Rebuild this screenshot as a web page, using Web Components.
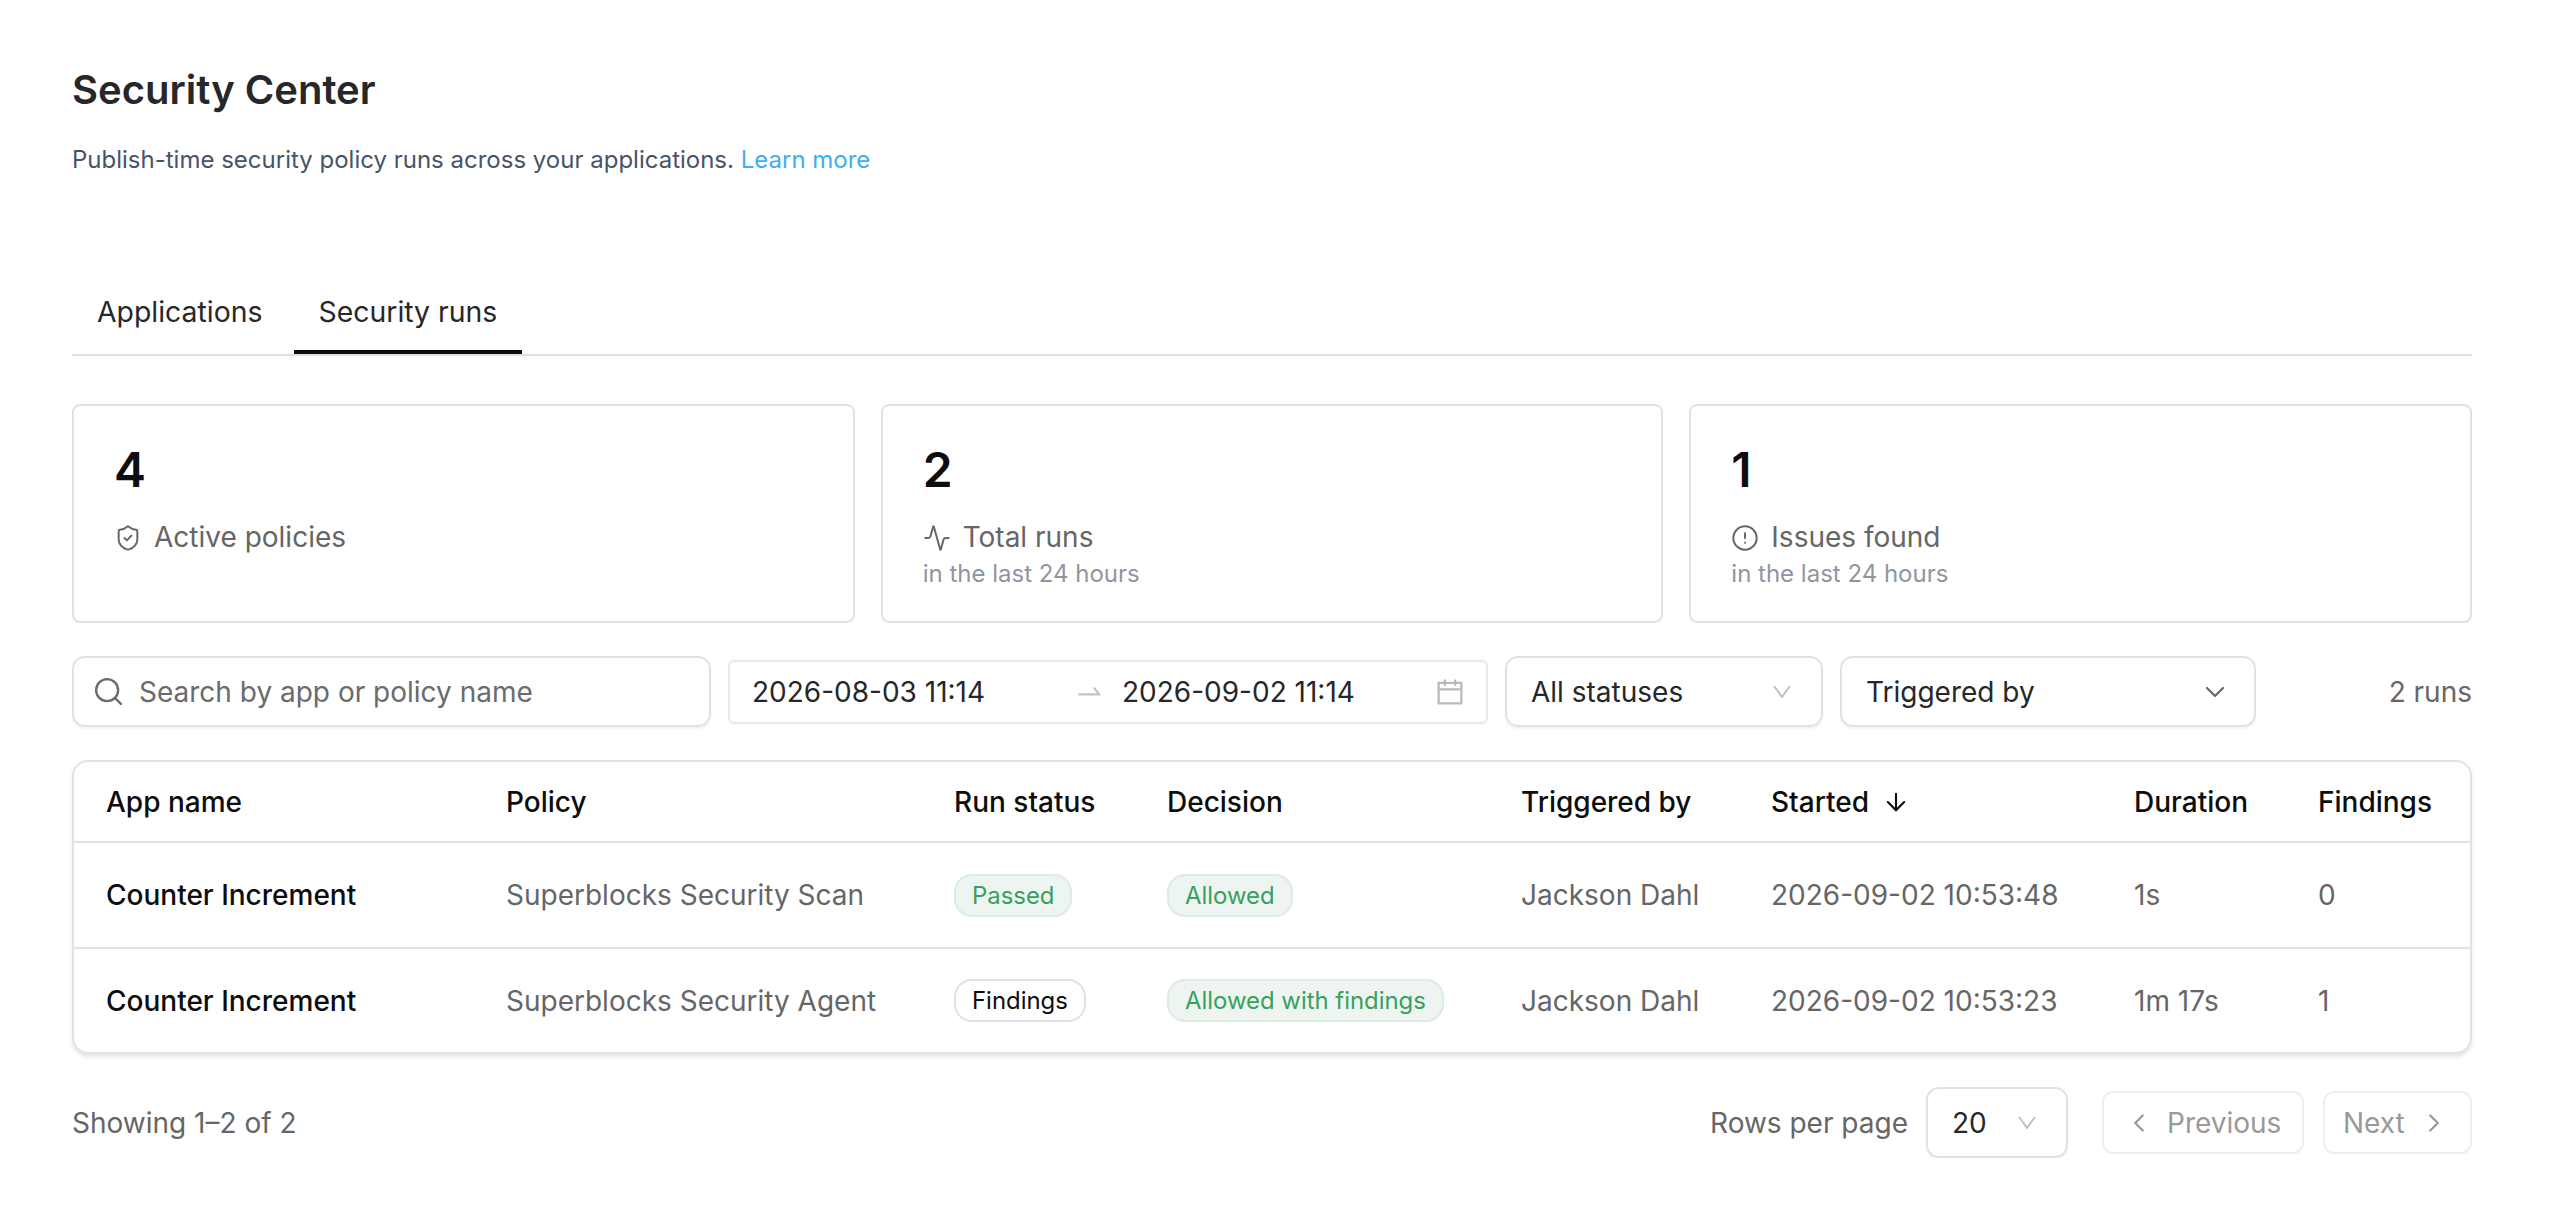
<!DOCTYPE html>
<html lang="en"><head><meta charset="utf-8"><title>Security Center</title>
<style>
html,body{margin:0;padding:0;background:#fff}
body{font-family:Inter,"Liberation Sans",sans-serif;color:#27272a}
</style></head><body>
<sc-app>
  <sc-header><span slot="title">Security Center</span>Publish-time security policy runs across your applications. <a>Learn more</a></sc-header>
  <sc-tabs><sc-tab>Applications</sc-tab><sc-tab active>Security runs</sc-tab></sc-tabs>
  <sc-stats>
    <sc-stat value="4" label="Active policies" icon="shield"></sc-stat>
    <sc-stat value="2" label="Total runs" icon="activity" sub="in the last 24 hours"></sc-stat>
    <sc-stat value="1" label="Issues found" icon="alert" sub="in the last 24 hours"></sc-stat>
  </sc-stats>
  <sc-toolbar>
    <sc-search placeholder="Search by app or policy name"></sc-search>
    <sc-daterange from="2026-08-03 11:14" to="2026-09-02 11:14"></sc-daterange>
    <sc-select w="318" value="All statuses" kind="light"></sc-select>
    <sc-select w="416" value="Triggered by" kind="dark"></sc-select>
    <sc-count>2 runs</sc-count>
  </sc-toolbar>
  <sc-table>
    <sc-row head><sc-cell>App name</sc-cell><sc-cell>Policy</sc-cell><sc-cell>Run status</sc-cell><sc-cell>Decision</sc-cell><sc-cell>Triggered by</sc-cell><sc-cell>Started <sc-sort></sc-sort></sc-cell><sc-cell>Duration</sc-cell><sc-cell>Findings</sc-cell></sc-row>
    <sc-row><sc-cell strong>Counter Increment</sc-cell><sc-cell>Superblocks Security Scan</sc-cell><sc-cell><sc-badge tone="green">Passed</sc-badge></sc-cell><sc-cell><sc-badge tone="green">Allowed</sc-badge></sc-cell><sc-cell>Jackson Dahl</sc-cell><sc-cell>2026-09-02 10:53:48</sc-cell><sc-cell>1s</sc-cell><sc-cell>0</sc-cell></sc-row>
    <sc-row><sc-cell strong>Counter Increment</sc-cell><sc-cell>Superblocks Security Agent</sc-cell><sc-cell><sc-badge>Findings</sc-badge></sc-cell><sc-cell><sc-badge tone="green">Allowed with findings</sc-badge></sc-cell><sc-cell>Jackson Dahl</sc-cell><sc-cell>2026-09-02 10:53:23</sc-cell><sc-cell>1m 17s</sc-cell><sc-cell>1</sc-cell></sc-row>
  </sc-table>
  <sc-pager showing="Showing 1–2 of 2" size="20"></sc-pager>
</sc-app>
<script>
const ICONS={
 shield:'<svg viewBox="0 0 24 24" width="28" height="28" fill="none" stroke="currentColor" stroke-width="1.7" stroke-linecap="round" stroke-linejoin="round"><path d="M20 13c0 5-3.5 7.5-7.66 8.95a1 1 0 0 1-.67-.01C7.5 20.5 4 18 4 13V6a1 1 0 0 1 1-1c2 0 4.5-1.2 6.24-2.72a1.17 1.17 0 0 1 1.52 0C14.51 3.81 17 5 19 5a1 1 0 0 1 1 1z"/><path d="m9 12 2 2 4-4"/></svg>',
 activity:'<svg viewBox="0 0 24 24" width="28" height="28" fill="none" stroke="currentColor" stroke-width="1.7" stroke-linecap="round" stroke-linejoin="round"><path d="M22 12h-2.48a2 2 0 0 0-1.93 1.46l-2.35 8.36a.25.25 0 0 1-.48 0L9.24 2.18a.25.25 0 0 0-.48 0l-2.35 8.36A2 2 0 0 1 4.49 12H2"/></svg>',
 alert:'<svg viewBox="0 0 24 24" width="28" height="28" fill="none" stroke="currentColor" stroke-width="1.7" stroke-linecap="round" stroke-linejoin="round"><circle cx="12" cy="12" r="10"/><line x1="12" x2="12" y1="8" y2="12"/><line x1="12" x2="12.01" y1="16" y2="16"/></svg>',
 search:'<svg viewBox="0 0 24 24" width="33" height="33" fill="none" stroke="currentColor" stroke-width="1.7" stroke-linecap="round" stroke-linejoin="round"><circle cx="11" cy="11" r="8"/><path d="m21 21-4.3-4.3"/></svg>',
 calendar:'<svg viewBox="0 0 1024 1024" width="32" height="32" fill="currentColor"><path d="M880 184H712v-64c0-4.4-3.6-8-8-8h-56c-4.4 0-8 3.6-8 8v64H384v-64c0-4.4-3.6-8-8-8h-56c-4.4 0-8 3.6-8 8v64H144c-17.7 0-32 14.3-32 32v664c0 17.7 14.3 32 32 32h736c17.7 0 32-14.3 32-32V216c0-17.7-14.3-32-32-32zm-40 656H184V460h656v380zM184 392V256h128v48c0 4.4 3.6 8 8 8h56c4.4 0 8-3.6 8-8v-48h256v48c0 4.4 3.6 8 8 8h56c4.4 0 8-3.6 8-8v-48h128v136H184z"/></svg>',
 swap:'<svg viewBox="0 0 1024 1024" width="31" height="31" fill="currentColor"><path d="M873.1 596.2l-164-208A32 32 0 0 0 684 376h-64.8c-6.7 0-10.4 7.7-6.3 13l144.3 183H152c-4.4 0-8 3.6-8 8v60c0 4.4 3.6 8 8 8h695.9c26.8 0 41.7-30.8 25.2-51.8z"/></svg>',
 caret:'<svg viewBox="0 0 1024 1024" width="24" height="24" fill="currentColor"><path d="M884 256h-75c-5.1 0-9.9 2.5-12.9 6.6L512 654.2 227.9 262.6c-3-4.1-7.8-6.6-12.9-6.6h-75c-6.1 0-9.7 6.9-6.1 11.7l352.6 486.1c12.8 17.6 39 17.6 51.7 0l352.6-486.1c3.7-4.8.1-11.7-6-11.7z"/></svg>',
 down:'<svg viewBox="0 0 24 24" width="32" height="32" fill="none" stroke="currentColor" stroke-width="1.6" stroke-linecap="round" stroke-linejoin="round"><path d="m6 9 6 6 6-6"/></svg>',
 left:'<svg viewBox="0 0 24 24" width="30" height="30" fill="none" stroke="currentColor" stroke-width="1.8" stroke-linecap="round" stroke-linejoin="round"><path d="m15 18-6-6 6-6"/></svg>',
 right:'<svg viewBox="0 0 24 24" width="30" height="30" fill="none" stroke="currentColor" stroke-width="1.8" stroke-linecap="round" stroke-linejoin="round"><path d="m9 18 6-6-6-6"/></svg>',
 arrow:'<svg viewBox="0 0 24 24" width="28" height="28" fill="none" stroke="currentColor" stroke-width="1.8" stroke-linecap="round" stroke-linejoin="round"><path d="M12 5v14"/><path d="m19 12-7 7-7-7"/></svg>'
};
function def(name,css,html){
  customElements.define(name,class extends HTMLElement{
    constructor(){super();this.attachShadow({mode:'open'});}
    connectedCallback(){
      const a=n=>this.getAttribute(n)||'';
      this.shadowRoot.innerHTML='<style>'+css+'</style>'+(typeof html==='function'?html(a,this):html);
    }
  });
}
def('sc-app',':host{display:block;box-sizing:border-box;width:2564px;padding:66px 92px 0 72px}','<slot></slot>');
def('sc-header',`:host{display:block;font-size:24px;line-height:34px;color:#475467}
 h1{margin:0 0 29px;font-size:40px;line-height:48px;font-weight:600;color:#27272a}
 ::slotted(a){color:#3eaef4}`,'<h1><slot name="title"></slot></h1><div><slot></slot></div>');
def('sc-tabs',':host{display:flex;margin-top:91px;border-bottom:2px solid #e0e0e0;gap:6px}','<slot></slot>');
def('sc-tab',`:host{display:block;box-sizing:border-box;height:86px;padding:25px 25px 0;font-size:28.4px;line-height:38px;color:#27272a}
 :host([active]){border-bottom:4px solid #0d0d0d}`,'<slot></slot>');
def('sc-stats',':host{display:grid;grid-template-columns:repeat(3,1fr);gap:26px;margin-top:48px}','<slot></slot>');
def('sc-stat',`:host{display:block;box-sizing:border-box;height:219px;border:2px solid #e2e2e5;border-radius:8px;padding:36px 40px 0}
 .v{font-size:48px;line-height:56px;font-weight:600;color:#0d0d0d}
 .l{display:flex;align-items:center;gap:12px;margin-top:21px;font-size:28px;line-height:36px;color:#666}
 svg{display:block;flex:none;margin-top:2px}
 .s{font-size:24px;line-height:34px;color:#9195a0;margin-top:2px}`,
 a=>`<div class="v">${a('value')}</div><div class="l">${ICONS[a('icon')]}<span>${a('label')}</span></div>${a('sub')?`<div class="s">${a('sub')}</div>`:''}`);
def('sc-toolbar',':host{display:flex;align-items:center;gap:17px;margin-top:33px;height:71px}','<slot></slot>');
def('sc-search',`:host{display:flex;box-sizing:border-box;align-items:center;gap:14px;width:639px;height:71px;padding:0 18px;border:2px solid #e2e2e5;border-radius:13px;box-shadow:0 2px 2px rgba(0,0,0,.05);font-size:28px;color:#6b6b6b}
 svg{display:block;flex:none}`,a=>`${ICONS.search}<span>${a('placeholder')}</span>`);
def('sc-daterange',`:host{display:flex;box-sizing:border-box;align-items:center;width:760px;height:64px;padding:0 20px 0 22px;border:2px solid #e8e8eb;border-radius:6px;font-size:28px;color:#27272a}
 span{display:block}.f{width:322px}.t{width:300px}
 i{display:block;width:48px;color:#c4c4c4}svg{display:block}
 .c{color:#b9b9b9;margin-left:auto}`,a=>`<span class="f">${a('from')}</span><i>${ICONS.swap}</i><span class="t">${a('to')}</span><div class="c">${ICONS.calendar}</div>`);
def('sc-select',`:host{display:flex;box-sizing:border-box;align-items:center;justify-content:space-between;height:71px;padding:0 27px 0 24px;border:2px solid #e2e2e5;border-radius:13px;box-shadow:0 2px 2px rgba(0,0,0,.05);font-size:28px;color:#27272a}
 :host([kind=dark]){padding-right:23px}
 .i{display:block;color:#bdbdbd}.dark{color:#666}svg{display:block}`,
 (a,el)=>{el.style.width=a('w')+'px';return `<span>${a('value')}</span><div class="i ${a('kind')}">${a('kind')==='dark'?ICONS.down:ICONS.caret}</div>`});
def('sc-count',':host{display:block;margin-left:auto;font-size:28px;color:#666}','<slot></slot>');
def('sc-table',`:host{display:block;margin-top:33px;border:2px solid #e2e2e5;border-radius:16px;box-shadow:0 3px 4px rgba(0,0,0,.1);overflow:hidden;background:#fff}`,'<slot></slot>');
def('sc-row',`:host{display:grid;box-sizing:border-box;grid-template-columns:400px 448px 213px 354px 250px 363px 184px 1fr;align-items:center;height:106px;border-top:2px solid #e2e2e5;font-size:28px;color:#666}
 :host(:last-child){height:105px}
 :host([head]){height:79px;border-top:0;color:#0d0d0d;font-weight:500}`,'<slot></slot>');
def('sc-cell',`:host{display:flex;align-items:center;padding-left:32px;white-space:nowrap}
 :host([strong]){color:#0d0d0d;font-weight:500}`,'<slot></slot>');
def('sc-sort',':host{display:block;color:#0d0d0d;margin-left:13px}svg{display:block}',()=>ICONS.arrow);
def('sc-badge',`:host{display:inline-flex;align-items:center;box-sizing:border-box;height:43px;padding:0 16px;border:2px solid #e2e2e5;border-radius:18px;font-size:23.9px;color:#0d0d0d;background:#fff}
 :host([tone=green]){background:#eef5f0;border-color:#dcece2;color:#36a15f}`,'<slot></slot>');
def('sc-pager',`:host{display:flex;align-items:center;height:71px;margin-top:33px;font-size:28px;color:#666}
 .sp{flex:1}.sel{display:flex;box-sizing:border-box;align-items:center;justify-content:space-between;width:142px;height:71px;margin-left:18px;padding:0 27px 0 24px;border:2px solid #e2e2e5;border-radius:13px;box-shadow:0 2px 2px rgba(0,0,0,.05);color:#27272a}
 .sel div{color:#bdbdbd}svg{display:block}
 .btn{display:flex;box-sizing:border-box;align-items:center;gap:13px;height:63px;border:2px solid #eeeeef;border-radius:11px;color:#999}
 .p{width:202px;margin-left:34px;padding-left:20px}.n{width:149px;margin-left:19px;padding-left:18px;gap:14px}`,
 a=>`<span>${a('showing')}</span><div class="sp"></div><span>Rows per page</span><div class="sel"><span>${a('size')}</span><div>${ICONS.caret}</div></div><div class="btn p">${ICONS.left}<span>Previous</span></div><div class="btn n"><span>Next</span>${ICONS.right}</div>`);
</script>
</body></html>
